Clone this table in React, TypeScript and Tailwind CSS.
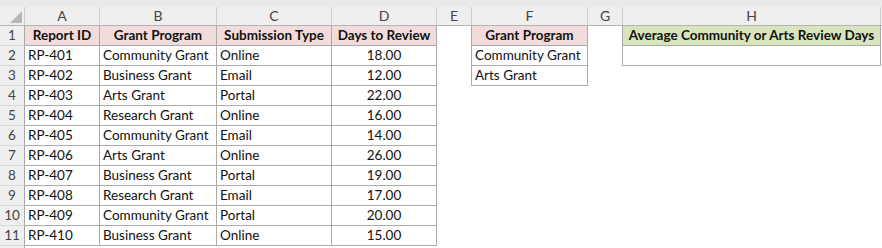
import React from 'react';

const rows = [
  ['RP-401', 'Community Grant', 'Online', '18.00'],
  ['RP-402', 'Business Grant', 'Email', '12.00'],
  ['RP-403', 'Arts Grant', 'Portal', '22.00'],
  ['RP-404', 'Research Grant', 'Online', '16.00'],
  ['RP-405', 'Community Grant', 'Email', '14.00'],
  ['RP-406', 'Arts Grant', 'Online', '26.00'],
  ['RP-407', 'Business Grant', 'Portal', '19.00'],
  ['RP-408', 'Research Grant', 'Email', '17.00'],
  ['RP-409', 'Community Grant', 'Portal', '20.00'],
  ['RP-410', 'Business Grant', 'Online', '15.00'],
];

const lookup = ['Community Grant', 'Arts Grant'];

const cols = [
  { key: 'A', w: 'w-[75px]' },
  { key: 'B', w: 'w-[117px]' },
  { key: 'C', w: 'w-[115px]' },
  { key: 'D', w: 'w-[105px]' },
  { key: 'E', w: 'w-[35px]' },
  { key: 'F', w: 'w-[116px]' },
  { key: 'G', w: 'w-[35px]' },
  { key: 'H', w: 'w-[258px]' },
];

const box = 'border-r border-b border-[#ababab] h-[20px] shrink-0 px-[3px] leading-[19px] whitespace-nowrap overflow-hidden';

const RowHead = ({ n }: { n?: number }) => (
  <div className="w-[25px] h-[20px] shrink-0 bg-[#efefef] border-r border-r-[#a8a8a8] border-b border-b-[#d8d8d8] text-center text-[#444] leading-[19px]">
    {n}
  </div>
);

export default function App() {
  return (
    <div className="w-[882px] h-[248px] overflow-hidden bg-white text-[13.5px] text-[#111] font-['Lato','Open_Sans',sans-serif]">
      <div className="h-[7px] bg-[#e9e9e9]" />

      {/* Column letters */}
      <div className="flex h-[19px] bg-[#efefef] border-b border-[#b4b4b4] text-[#444] leading-[18px] text-[14px]">
        <div className="relative w-[25px] shrink-0 border-r border-[#d0d0d0]">
          <svg className="absolute left-[10px] top-[4px]" width="12" height="12" viewBox="0 0 12 12">
            <polygon points="12,0 12,12 0,12" fill="#b6b6b6" />
          </svg>
        </div>
        {cols.map((c) => (
          <div key={c.key} className={`${c.w} shrink-0 border-r border-[#d0d0d0] text-center`}>
            {c.key}
          </div>
        ))}
        <div className="flex-1" />
      </div>

      {/* Row 1 headers */}
      <div className="flex">
        <RowHead n={1} />
        <div className={`w-[75px] ${box} bg-[#f2dcdb] font-bold text-center`}>Report ID</div>
        <div className={`w-[117px] ${box} bg-[#f2dcdb] font-bold text-center`}>Grant Program</div>
        <div className={`w-[115px] ${box} bg-[#f2dcdb] font-bold text-center`}>Submission Type</div>
        <div className={`w-[105px] ${box} bg-[#f2dcdb] font-bold text-center`}>Days to Review</div>
        <div className="w-[35px] h-[20px] shrink-0 border-r border-[#ababab]" />
        <div className={`w-[116px] ${box} bg-[#f2dcdb] font-bold text-center`}>Grant Program</div>
        <div className="w-[35px] h-[20px] shrink-0 border-r border-[#ababab]" />
        <div className={`w-[258px] ${box} bg-[#d8e4bc] font-bold text-center`}>Average Community or Arts Review Days</div>
      </div>

      {rows.map((r, i) => (
        <div key={r[0]} className="flex">
          <RowHead n={i + 2} />
          <div className={`w-[75px] ${box}`}>{r[0]}</div>
          <div className={`w-[117px] ${box}`}>{r[1]}</div>
          <div className={`w-[115px] ${box}`}>{r[2]}</div>
          <div className={`w-[105px] ${box} text-center`}>{r[3]}</div>
          <div className={`w-[35px] h-[20px] shrink-0 ${i < 2 ? 'border-r border-[#ababab]' : ''}`} />
          {i < 2 ? (
            <div className={`w-[116px] ${box}`}>{lookup[i]}</div>
          ) : (
            <div className="w-[116px] h-[20px] shrink-0" />
          )}
          <div className={`w-[35px] h-[20px] shrink-0 ${i < 1 ? 'border-r border-[#ababab]' : ''}`} />
          {i < 1 ? <div className={`w-[258px] ${box}`} /> : <div className="w-[258px] h-[20px] shrink-0" />}
        </div>
      ))}

      {/* Next row header, mostly cropped */}
      <div className="flex">
        <RowHead />
      </div>
    </div>
  );
}
